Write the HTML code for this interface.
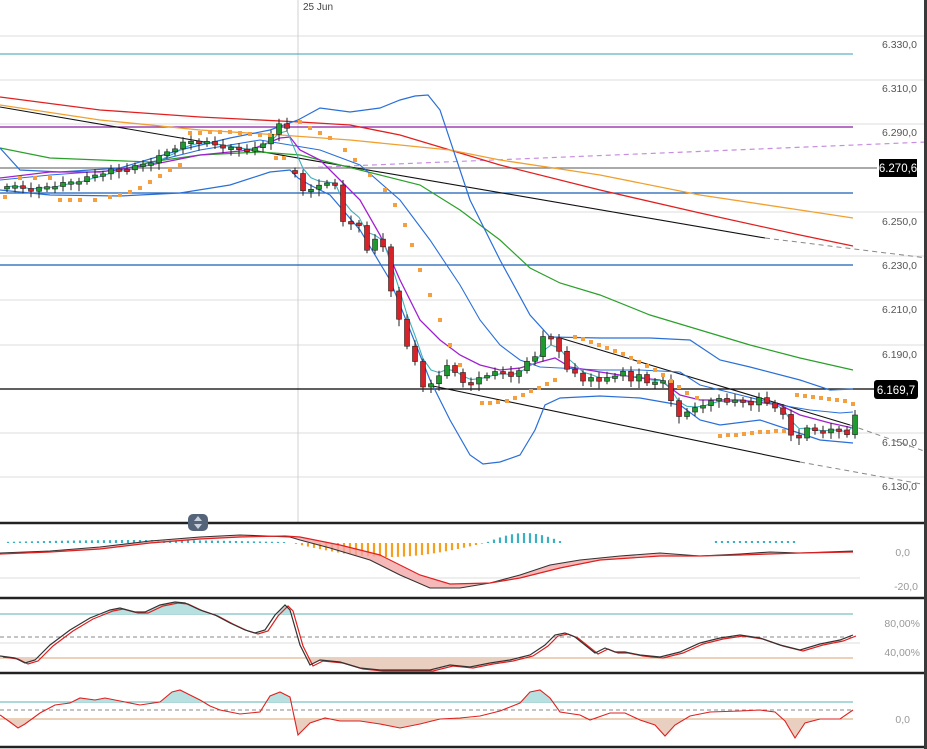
<!DOCTYPE html><html><head><meta charset="utf-8"><style>
html,body{margin:0;padding:0;background:#fff;width:927px;height:749px;overflow:hidden;font-family:"Liberation Sans",sans-serif}
svg{position:absolute;left:0;top:0}
</style></head><body>
<svg id="s" width="927" height="749" xmlns="http://www.w3.org/2000/svg" font-family="Liberation Sans, sans-serif">
<rect width="927" height="749" fill="#fff"/>
<g stroke="#dcdcdc" stroke-width="1">
<line x1="0" y1="36" x2="924" y2="36"/><line x1="0" y1="80" x2="924" y2="80"/><line x1="0" y1="124" x2="924" y2="124"/><line x1="0" y1="212" x2="924" y2="212"/><line x1="0" y1="256" x2="924" y2="256"/><line x1="0" y1="300" x2="924" y2="300"/><line x1="0" y1="345" x2="924" y2="345"/><line x1="0" y1="433" x2="924" y2="433"/><line x1="0" y1="477" x2="924" y2="477"/>
<line x1="0" y1="578" x2="860" y2="578"/><line x1="0" y1="643" x2="860" y2="643"/>
<line x1="298" y1="0" x2="298" y2="522" stroke="#d0d0d0"/>
</g>
<text x="303" y="10" font-size="10" fill="#444">25 Jun</text>
<g fill="#555" font-size="10.5" text-anchor="end">
<text x="917" y="48">6.330,0</text><text x="917" y="92">6.310,0</text><text x="917" y="136">6.290,0</text><text x="917" y="225">6.250,0</text><text x="917" y="269">6.230,0</text><text x="917" y="313">6.210,0</text><text x="917" y="358">6.190,0</text><text x="917" y="446">6.150,0</text><text x="917" y="490">6.130,0</text>
</g>
<g fill="#999" font-size="10.5" text-anchor="end">
<text x="910" y="556">0,0</text><text x="918" y="590">-20,0</text><text x="920" y="627">80,00%</text><text x="920" y="656">40,00%</text><text x="910" y="723">0,0</text>
</g>
<line x1="0" y1="54" x2="853" y2="54" stroke="#3aa0b0"/>
<line x1="0" y1="127" x2="853" y2="127" stroke="#8a1aa0" stroke-width="1.3"/>
<line x1="0" y1="168" x2="877" y2="168" stroke="#777" stroke-width="1.3"/>
<line x1="0" y1="193" x2="853" y2="193" stroke="#1a5fb4" stroke-width="1.2"/>
<line x1="0" y1="265" x2="853" y2="265" stroke="#1a5fb4" stroke-width="1.2"/>
<line x1="0" y1="389" x2="877" y2="389" stroke="#000" stroke-width="1.2"/>
<line x1="300" y1="168" x2="927" y2="142" stroke="#c78ee0" stroke-dasharray="5,4" stroke-width="1.2"/>
<line x1="0" y1="107" x2="765" y2="238" stroke="#111" stroke-width="1.1"/>
<line x1="765" y1="238" x2="927" y2="258" stroke="#888" stroke-dasharray="5,4"/>
<line x1="428" y1="385" x2="800" y2="462" stroke="#111" stroke-width="1.1"/>
<line x1="800" y1="462" x2="927" y2="485" stroke="#888" stroke-dasharray="5,4"/>
<line x1="557" y1="337" x2="850" y2="425" stroke="#111" stroke-width="1.1"/>
<line x1="850" y1="425" x2="927" y2="452" stroke="#888" stroke-dasharray="5,4"/>
<g id="ind" fill="none"></g>
<g id="cand"></g>
<g id="low"></g>
<g stroke="#222" stroke-width="2.5"><line x1="0" y1="523" x2="924" y2="523"/><line x1="0" y1="598" x2="924" y2="598"/><line x1="0" y1="673" x2="924" y2="673"/><line x1="0" y1="747" x2="924" y2="747"/></g>
<rect x="188" y="514" width="20" height="17" rx="5" fill="#56647a"/>
<path d="M194 521 L198 516 L202 521 Z M194 524 L198 529 L202 524 Z" fill="#c8d0dc"/>
<rect x="879" y="159" width="38" height="18" fill="#000"/><text x="898" y="172" font-size="11.5" fill="#fff" text-anchor="middle">6.270,6</text>
<rect x="874" y="380" width="44" height="19" rx="3" fill="#000"/><text x="896" y="394" font-size="11.5" fill="#fff" text-anchor="middle">6.169,7</text>
<rect x="924" y="0" width="3" height="749" fill="#3a3a3a"/>
</svg>
<script>
(function(){
var NS="http://www.w3.org/2000/svg";
function el(p,t,a){var e=document.createElementNS(NS,t);for(var k in a)e.setAttribute(k,a[k]);p.appendChild(e);return e;}
function pts(a){return a.map(function(p){return p[0]+","+p[1]}).join(" ");}
function interp(k,x){for(var i=0;i<k.length-1;i++){if(x>=k[i][0]&&x<=k[i+1][0]){var t=(x-k[i][0])/(k[i+1][0]-k[i][0]||1);return k[i][1]+t*(k[i+1][1]-k[i][1]);}}return x<k[0][0]?k[0][1]:k[k.length-1][1];}
var ind=document.getElementById("ind");
function line(a,c,w){el(ind,"polyline",{points:pts(a),stroke:c,"stroke-width":w||1.2,fill:"none"});}
line([[0,97],[100,110],[200,117],[300,122],[350,125],[400,135],[450,150],[500,165],[600,190],[700,213],[800,235],[853,246]],"#e02020",1.3);
line([[0,105],[100,120],[200,130],[280,135],[350,140],[400,145],[450,150],[500,160],[600,175],[700,195],[800,210],[853,218]],"#f0a030",1.3);
line([[0,148],[50,158],[100,160],[150,162],[200,155],[260,152],[300,155],[340,165],[380,175],[420,185],[460,210],[500,240],[530,268],[560,283],[600,295],[650,315],[700,330],[750,345],[800,358],[853,370]],"#2aa02a",1.2);
line([[0,148],[20,170],[60,172],[120,168],[180,150],[230,138],[270,130],[298,120],[320,108],[350,112],[380,108],[400,100],[415,96],[428,95],[440,110],[470,200],[500,260],[530,315],[550,337],[600,338],[650,338],[690,340],[720,360],[750,367],[800,380],[830,390],[853,389]],"#2a6fd8",1.2);
line([[0,180],[50,175],[120,170],[200,150],[260,140],[290,145],[320,150],[360,165],[400,200],[430,240],[460,285],[480,320],[500,345],[520,360],[540,367],[560,368],[600,370],[640,370],[680,372],[700,385],[740,395],[780,405],[810,410],[840,413],[853,412]],"#2a6fd8",1.1);
line([[0,190],[50,195],[120,196],[180,193],[230,185],[270,172],[290,170],[298,178],[310,185],[330,195],[360,230],[390,280],[410,330],[430,380],[450,420],[470,455],[483,464],[500,462],[520,455],[535,430],[545,405],[560,398],[600,396],[640,398],[680,405],[700,420],[720,425],[760,420],[790,430],[820,440],[853,443]],"#2a6fd8",1.2);
line([[0,178],[50,172],[100,172],[150,165],[200,155],[250,150],[280,138],[290,137],[300,150],[320,160],[340,180],[360,200],[380,235],[400,280],[420,320],[440,340],[460,355],[480,365],[500,370],[520,368],[540,362],[555,358],[570,367],[600,372],[640,378],[660,380],[680,395],[700,400],[740,400],[780,405],[800,415],[830,423],[853,428]],"#a020d0",1.3);
var K=[[7,185],[30,190],[55,185],[80,180],[110,170],[130,168],[150,162],[170,150],[185,142],[200,140],[215,145],[230,148],[245,150],[260,148],[273,130],[281,123],[289,130],[298,193],[310,190],[320,183],[335,185],[343,220],[351,224],[358,222],[366,250],[374,240],[382,241],[389,282],[397,312],[405,345],[413,350],[421,390],[428,383],[436,385],[443,360],[451,373],[459,372],[467,390],[475,380],[483,375],[491,373],[499,372],[507,372],[515,378],[520,370],[528,360],[534,358],[541,338],[549,336],[557,344],[566,370],[574,372],[581,380],[590,378],[598,382],[606,376],[614,378],[622,370],[630,380],[640,375],[648,384],[656,380],[665,382],[674,410],[682,418],[690,410],[700,405],[710,402],[720,398],[730,402],[740,400],[750,404],[760,398],[770,405],[780,408],[795,445],[803,428],[812,430],[820,432],[830,430],[840,430],[849,434],[855,416]];
var cg=document.getElementById("cand"),cl=[],prev=null;
for(var i=0;i<=106;i++){var x=7+8*i;var c=interp(K,x)+((i%3==0)?1.5:(i%3==1?-1:0));var o=prev==null?c+2:prev;
 if(x>290&&x<300)o=c-3;
 cl.push([x,c]);var tp=Math.min(o,c),h=Math.max(Math.abs(o-c),2.5);
 var up=c<o;el(cg,"line",{x1:x,x2:x,y1:tp-3-(i%4),y2:tp+h+3+(i%5),stroke:"#222","stroke-width":1});
 el(cg,"rect",{x:x-2.5,y:tp,width:5,height:h,fill:up?"#1f9a2e":"#d8222a",stroke:"#222","stroke-width":0.6});prev=c;}
var f=[],ev=cl[0][1];cl.forEach(function(p){ev=ev+(p[1]-ev)*0.45;f.push([p[0],ev.toFixed(1)]);});
line(f,"#40b0b8",1.1);
var sar=[[5,197],[20,178],[35,178],[50,178],[60,200],[70,200],[80,200],[95,200],[110,197],[120,195],[130,192],[140,188],[150,182],[160,176],[170,170],[180,165],[190,133],[200,133],[210,132],[220,132],[230,132],[240,133],[250,134],[260,135],[270,135],[276,158],[284,158],[300,122],[310,128],[320,133],[330,138],[345,150],[355,160],[370,175],[385,190],[395,205],[405,225],[412,245],[420,270],[430,295],[440,320],[450,345],[460,365],[482,403],[490,403],[498,402],[507,401],[515,398],[523,395],[531,391],[539,388],[547,384],[555,380],[575,337],[583,339],[591,342],[599,345],[607,348],[615,351],[623,354],[631,358],[639,362],[647,366],[655,370],[663,375],[671,381],[679,387],[687,393],[697,398],[720,436],[728,435],[736,435],[744,434],[752,433],[760,432],[768,432],[776,431],[784,431],[797,395],[805,396],[813,397],[821,398],[829,399],[837,400],[845,401],[853,404]];
sar.forEach(function(p){el(cg,"rect",{x:p[0]-2,y:p[1]-2,width:4,height:4,fill:"#f5a040"});});
var lg=document.getElementById("low");
for(var x=8;x<860;x+=6){var h=0,col="#3ab0c0";
 if(x<290)h=-(1+2*Math.sin(x/90));else if(x<485){h=14*Math.sin((x-292)/193*Math.PI);col="#f5a020";}
 else if(x<565){h=-10*Math.sin((x-485)/80*Math.PI);}else if(x>715&&x<795)h=-2;else h=0;
 if(Math.abs(h)>0.5)el(lg,"line",{x1:x,x2:x,y1:543,y2:543+h,stroke:col,"stroke-width":2.2});}
var mb=[[0,553],[50,551],[100,547],[150,541],[200,537],[240,535],[290,537],[300,540],[330,548],[370,560],[400,575],[430,588],[460,588],[490,583],[520,575],[550,565],[580,560],[620,556],[660,553],[700,556],[740,554],[770,552],[800,553],[853,551]];
var mr=[[0,554],[50,552],[100,549],[150,543],[200,539],[240,537],[285,536],[300,537],[340,545],[380,555],[420,575],[450,584],[490,583],[520,578],[560,568],[600,560],[660,556],[700,556],[740,555],[800,553],[853,552]];
el(lg,"polygon",{points:pts(mb.concat(mr.slice().reverse())),fill:"#f4a8a8",opacity:0.8});
el(lg,"polyline",{points:pts(mb),stroke:"#333",fill:"none","stroke-width":1.1});
el(lg,"polyline",{points:pts(mr),stroke:"#e02020",fill:"none","stroke-width":1.2});
el(lg,"line",{x1:0,y1:614,x2:853,y2:614,stroke:"#5ab0b0"});
el(lg,"line",{x1:0,y1:637,x2:853,y2:637,stroke:"#888","stroke-dasharray":"4,3"});
el(lg,"line",{x1:0,y1:658,x2:853,y2:658,stroke:"#d8a070"});
var st=[[0,656],[15,658],[25,663],[35,660],[50,645],[70,630],[90,618],[100,614],[110,610],[120,608],[135,612],[145,612],[160,605],[175,602],[185,603],[200,610],[215,615],[230,623],[245,630],[255,633],[265,630],[275,615],[285,605],[290,610],[300,645],[310,665],[320,660],[340,662],[360,668],[380,670],[400,670],[430,670],[450,665],[470,667],[490,663],[510,660],[530,655],[545,645],[555,635],[565,633],[575,637],[585,645],[595,653],[605,648],[615,652],[625,652],[640,655],[660,657],[680,652],[700,643],[720,638],[740,635],[760,638],[780,645],[800,650],[820,644],[840,640],[853,635]];
function fillLvl(a,lv,above,col,id){var cp=el(lg,"clipPath",{id:id});el(cp,"rect",above?{x:0,y:0,width:927,height:lv}:{x:0,y:lv,width:927,height:200});
 el(lg,"polygon",{points:pts([[a[0][0],lv]].concat(a).concat([[a[a.length-1][0],lv]])),fill:col,"clip-path":"url(#"+id+")"});}
fillLvl(st,614,true,"#b8e0e0","c1");fillLvl(st,658,false,"#e8cfc0","c2");
el(lg,"polyline",{points:pts(st.map(function(p){return [p[0]+3,p[1]+1]})),stroke:"#e02020",fill:"none","stroke-width":1.2});
el(lg,"polyline",{points:pts(st),stroke:"#333",fill:"none","stroke-width":1.2});
el(lg,"line",{x1:0,y1:702,x2:853,y2:702,stroke:"#5ab0b0"});
el(lg,"line",{x1:0,y1:710,x2:853,y2:710,stroke:"#888","stroke-dasharray":"4,3"});
el(lg,"line",{x1:0,y1:719,x2:853,y2:719,stroke:"#d8a070"});
var bt=[[0,715],[10,722],[18,728],[25,724],[40,713],[55,705],[70,703],[80,698],[95,700],[105,698],[115,700],[140,705],[160,702],[172,692],[180,690],[200,700],[210,706],[220,710],[240,714],[260,712],[270,696],[280,692],[290,697],[298,735],[310,723],[325,718],[340,721],[360,721],[380,724],[400,728],[420,724],[440,719],[460,718],[480,716],[500,711],[520,703],[530,692],[540,690],[550,698],[560,712],[580,715],[590,720],[610,713],[625,713],[640,720],[655,725],[665,736],[675,725],[690,716],[710,712],[740,711],[760,710],[775,712],[785,721],[795,738],[805,723],[820,719],[840,719],[853,710]];
fillLvl(bt,702,true,"#b8e0e0","c3");fillLvl(bt,719,false,"#e8cfc0","c4");
el(lg,"polyline",{points:pts(bt),stroke:"#e02020",fill:"none","stroke-width":1.1});
})();
</script>
</body></html>
